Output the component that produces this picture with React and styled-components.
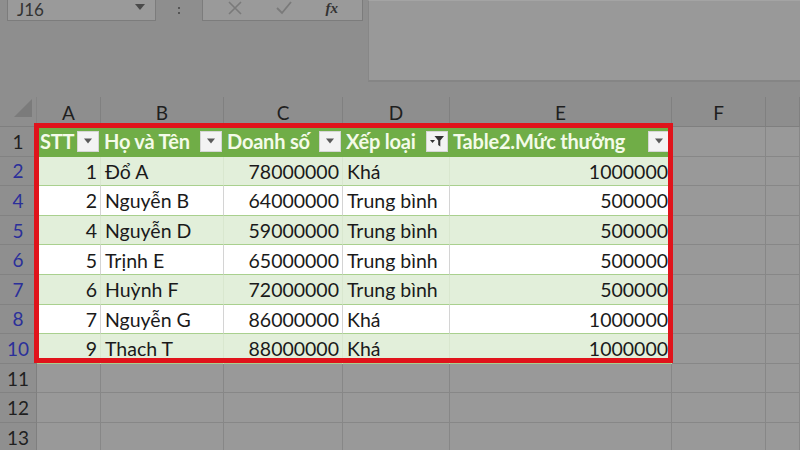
import React from "react";
import styled, { createGlobalStyle } from "styled-components";

const GlobalStyle = createGlobalStyle`
  * { box-sizing: border-box; }
  html, body { margin: 0; padding: 0; }
  body {
    width: 800px;
    height: 450px;
    overflow: hidden;
    background: #8e8e8e;
    font-family: Lato, "Open Sans", sans-serif;
  }
`;

const Page = styled.div`
  display: flex;
  flex-direction: column;
  width: 800px;
  height: 450px;
`;

const TopBar = styled.div`
  display: flex;
  height: 97px;
`;

const LeftTools = styled.div`
  width: 368px;
  display: flex;
  align-items: flex-start;
  padding-left: 7px;
`;

const NameBox = styled.div`
  width: 149px;
  height: 23px;
  margin-top: -2px;
  background: #9a9a9a;
  border: 1px solid #7c7c7c;
  display: flex;
  align-items: center;
  justify-content: space-between;
  padding: 0 10px 0 9px;
  font-size: 17px;
  color: #333;
`;

const Caret = styled.span`
  width: 0;
  height: 0;
  border-left: 5px solid transparent;
  border-right: 5px solid transparent;
  border-top: 6px solid #4a4a4a;
  margin-top: -6px;
`;

const Dots = styled.div`
  width: 46px;
  height: 20px;
  display: flex;
  flex-direction: column;
  align-items: center;
  justify-content: center;
  gap: 3px;
  span {
    width: 2px;
    height: 2px;
    background: #555;
  }
`;

const FxBox = styled.div`
  width: 161px;
  height: 23px;
  margin-top: -2px;
  background: #9a9a9a;
  border: 1px solid #7c7c7c;
  display: flex;
  align-items: center;
  justify-content: space-around;
  padding: 0 8px;
  svg {
    margin-top: -4px;
  }
`;

const FxGlyph = styled.span`
  font-family: "Liberation Serif", serif;
  font-style: italic;
  font-weight: bold;
  font-size: 15px;
  line-height: 15px;
  color: #333;
  margin-top: -3px;
`;

const FormulaPanel = styled.div`
  flex: 1;
  height: 82px;
  background: #999999;
  border-left: 1px solid #878787;
  border-top: 1px solid #a4a4a4;
  border-bottom: 2px solid #858585;
`;

const Sheet = styled.div`
  position: relative;
  display: grid;
  grid-template-columns: 37px 64px 123px 119px 107px 222px 94px 1fr;
  grid-auto-rows: 29.6px;
  grid-template-rows: 30px;
  flex: 1;
  overflow: hidden;
`;

const Corner = styled.div`
  background: #8e8e8e;
  border-right: 1px solid #858585;
  border-bottom: 1px solid #7f7f7f;
  display: flex;
  align-items: flex-end;
  justify-content: flex-end;
  padding: 0 4px 9px 0;
`;

const ColHead = styled.div`
  background: #8e8e8e;
  border-right: 1px solid #808080;
  border-bottom: 1px solid #7f7f7f;
  display: flex;
  align-items: center;
  justify-content: center;
  font-size: 19px;
  color: #1f1f1f;
  padding-top: 2px;
`;

const RowHead = styled.div`
  background: #8f8f8f;
  border-right: 1px solid #7f7f7f;
  border-bottom: 1px solid #828282;
  display: flex;
  align-items: center;
  justify-content: center;
  font-size: 19px;
  color: ${({ $filtered }) => ($filtered ? "#2b2f9a" : "#1f1f1f")};
`;

const Blank = styled.div`
  background: #999999;
  border-right: 1px solid #878787;
  border-bottom: 1px solid #878787;
`;

const HeadCell = styled.div`
  background: #70ad47;
  display: flex;
  align-items: center;
  justify-content: space-between;
  gap: 3px;
  padding: 0 2px 0 3px;
  font-weight: bold;
  font-size: 20px;
  letter-spacing: -0.2px;
  color: #f4fbe9;
  white-space: nowrap;
  border-bottom: 1px solid #70ad47;
`;

const FilterBtn = styled.span`
  flex: none;
  width: 22px;
  height: 21px;
  background: #f3f3f3;
  border: 1px solid #d6d6d6;
  display: flex;
  align-items: center;
  justify-content: center;
`;

const Cell = styled.div`
  background: ${({ $band }) => ($band ? "#e2efda" : "#ffffff")};
  border-bottom: 1px solid #a9d08e;
  border-right: 1px solid ${({ $band }) => ($band ? "#d9e7cf" : "#d4d4d4")};
  display: flex;
  align-items: center;
  justify-content: ${({ $num }) => ($num ? "flex-end" : "flex-start")};
  padding: 1px 3px 0 4px;
  font-size: 19.5px;
  color: #1a1a1a;
  white-space: nowrap;
`;

const Highlight = styled.div`
  position: absolute;
  left: 34px;
  top: 26px;
  width: 639px;
  height: 240px;
  border: 5px solid #e0131b;
  pointer-events: none;
`;

const Arrow = () => (
  <svg width="10" height="6" viewBox="0 0 10 6">
    <path d="M1 0.5 L9 0.5 L5 5.5 Z" fill="#5a5a5a" />
  </svg>
);

const FunnelIcon = () => (
  <svg width="16" height="14" viewBox="0 0 16 14">
    <path d="M1 6 L6 6 L3.5 9 Z" fill="#333" />
    <path d="M5.5 2 L15 2 L11.3 6.5 L11.3 12.5 L9.2 11 L9.2 6.5 Z" fill="#333" />
  </svg>
);

const CornerTriangle = () => (
  <svg width="18" height="18" viewBox="0 0 18 18">
    <path d="M18 0 L18 18 L0 18 Z" fill="#7b7b7b" />
  </svg>
);

const cols = ["A", "B", "C", "D", "E", "F", ""];

const headers = [
  { label: "STT" },
  { label: "Họ và Tên" },
  { label: "Doanh số" },
  { label: "Xếp loại", filtered: true },
  { label: "Table2.Mức thưởng" },
];

const rows = [
  { n: 2, stt: 1, name: "Đổ A", sales: "78000000", rank: "Khá", bonus: "1000000" },
  { n: 4, stt: 2, name: "Nguyễn B", sales: "64000000", rank: "Trung bình", bonus: "500000" },
  { n: 5, stt: 4, name: "Nguyễn D", sales: "59000000", rank: "Trung bình", bonus: "500000" },
  { n: 6, stt: 5, name: "Trịnh E", sales: "65000000", rank: "Trung bình", bonus: "500000" },
  { n: 7, stt: 6, name: "Huỳnh F", sales: "72000000", rank: "Trung bình", bonus: "500000" },
  { n: 8, stt: 7, name: "Nguyễn G", sales: "86000000", rank: "Khá", bonus: "1000000" },
  { n: 10, stt: 9, name: "Thach T", sales: "88000000", rank: "Khá", bonus: "1000000" },
];

const App = () => {
  return (
    <Page>
      <GlobalStyle />
      <TopBar>
        <LeftTools>
          <NameBox>
            J16
            <Caret />
          </NameBox>
          <Dots>
            <span />
            <span />
          </Dots>
          <FxBox>
            <svg width="16" height="16" viewBox="0 0 16 16">
              <path d="M2 2 L14 14 M14 2 L2 14" stroke="#7a7a7a" strokeWidth="1.6" />
            </svg>
            <svg width="18" height="16" viewBox="0 0 18 16">
              <path d="M2 8 L7 13 L16 2" stroke="#7a7a7a" strokeWidth="1.8" fill="none" />
            </svg>
            <FxGlyph>fx</FxGlyph>
          </FxBox>
        </LeftTools>
        <FormulaPanel />
      </TopBar>

      <Sheet>
        <Corner>
          <CornerTriangle />
        </Corner>
        {cols.map((c, i) => (
          <ColHead key={i}>{c}</ColHead>
        ))}

        <RowHead>1</RowHead>
        {headers.map((h) => (
          <HeadCell key={h.label}>
            {h.label}
            <FilterBtn>{h.filtered ? <FunnelIcon /> : <Arrow />}</FilterBtn>
          </HeadCell>
        ))}
        <Blank />
        <Blank />

        {rows.map((r, i) => {
          const band = i % 2 === 0;
          return (
            <React.Fragment key={r.n}>
              <RowHead $filtered>{r.n}</RowHead>
              <Cell $band={band} $num>{r.stt}</Cell>
              <Cell $band={band}>{r.name}</Cell>
              <Cell $band={band} $num>{r.sales}</Cell>
              <Cell $band={band}>{r.rank}</Cell>
              <Cell $band={band} $num>{r.bonus}</Cell>
              <Blank />
              <Blank />
            </React.Fragment>
          );
        })}

        {[11, 12, 13].map((n) => (
          <React.Fragment key={n}>
            <RowHead>{n}</RowHead>
            {cols.map((_, i) => (
              <Blank key={i} />
            ))}
          </React.Fragment>
        ))}

        <Highlight />
      </Sheet>
    </Page>
  );
};

export default App;
